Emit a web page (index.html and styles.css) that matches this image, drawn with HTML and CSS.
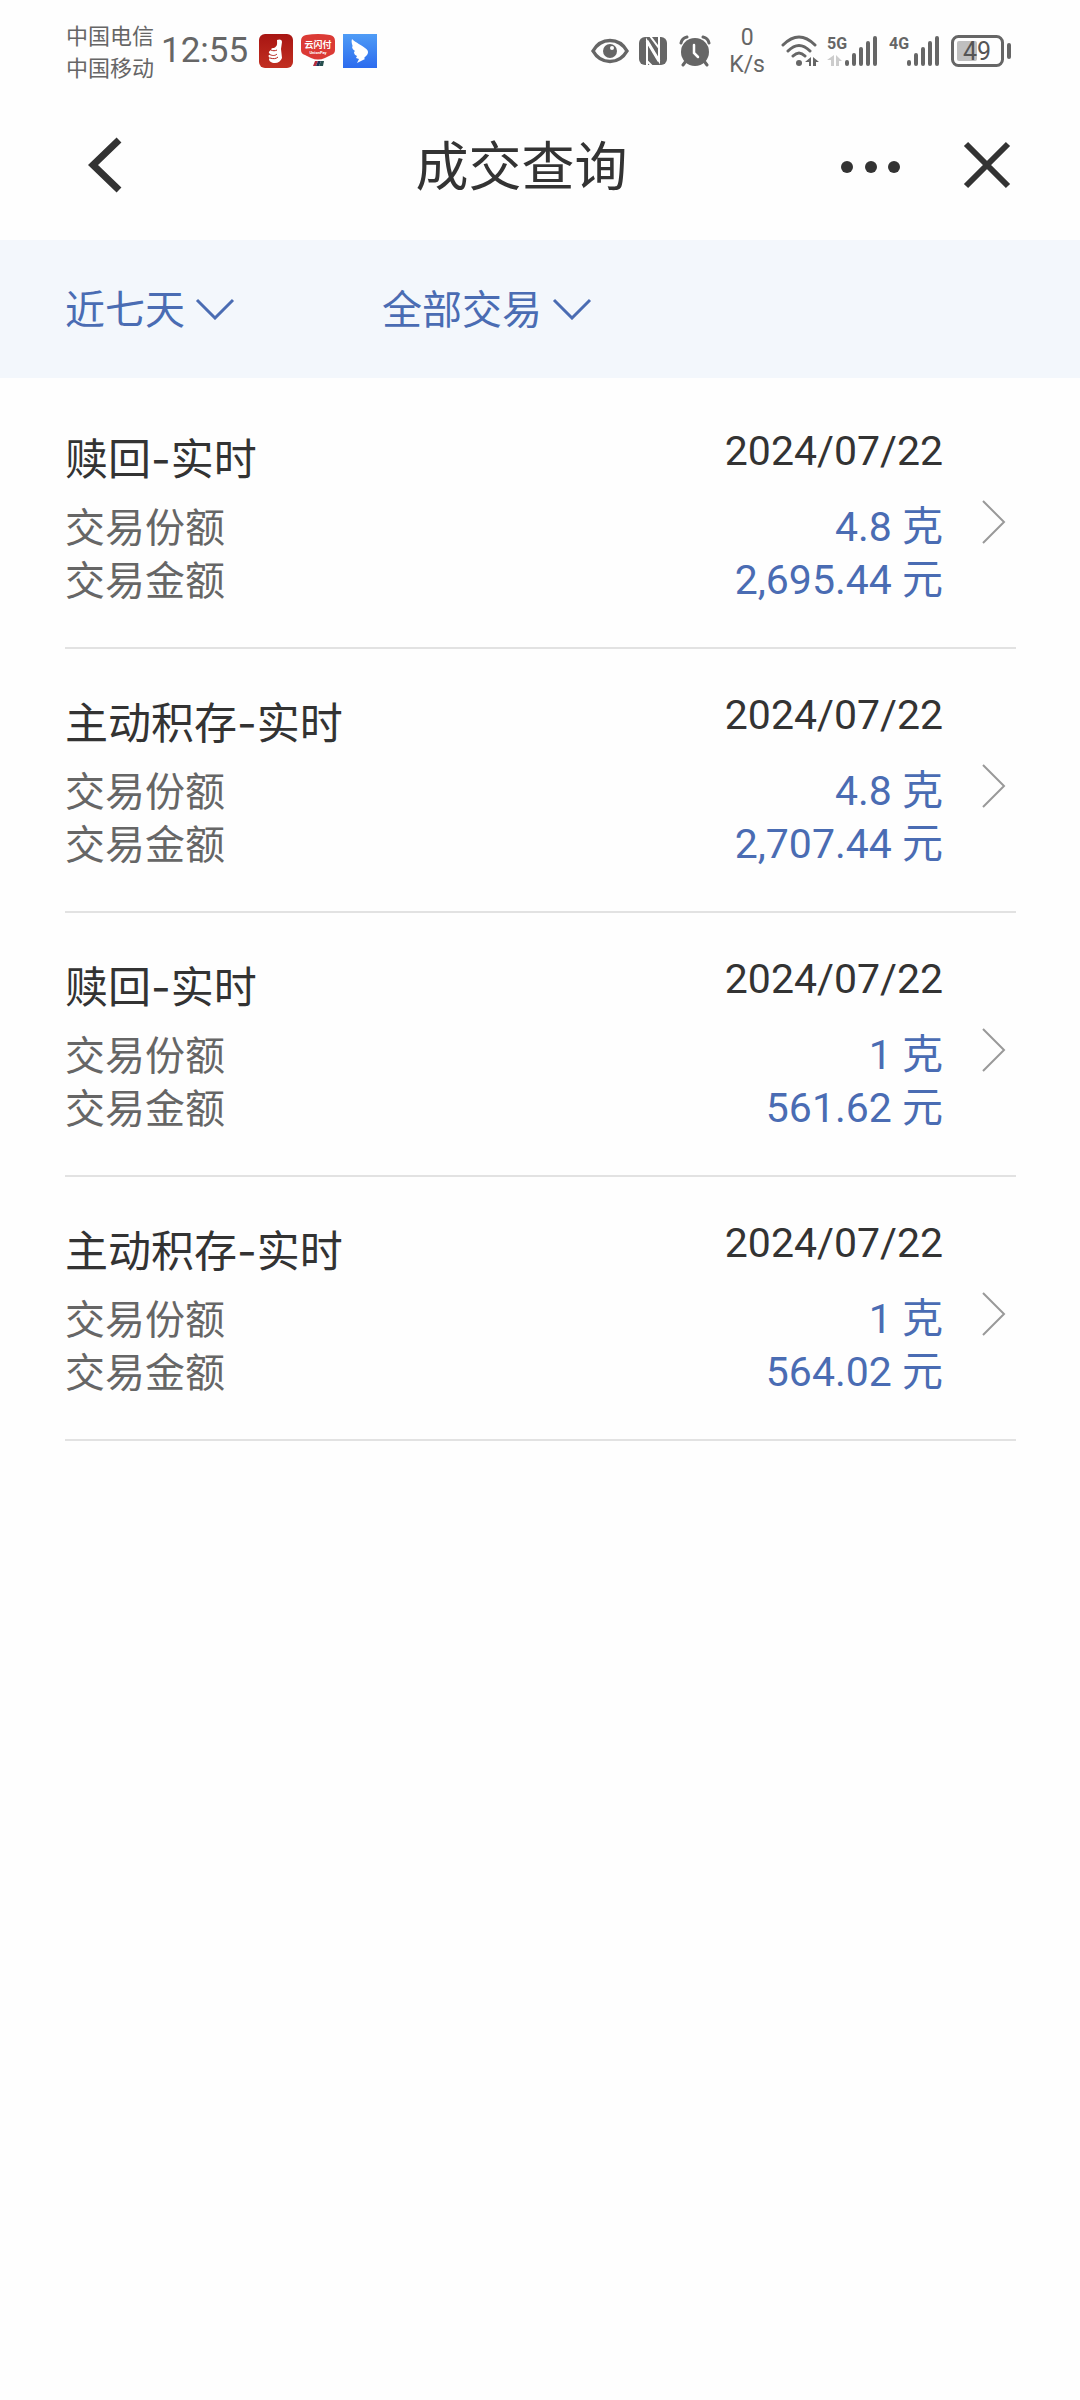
FILE: index.html
```html
<!DOCTYPE html>
<html lang="zh-CN">
<head>
<meta charset="utf-8">
<meta name="viewport" content="width=device-width, initial-scale=1">
<title>成交查询</title>
<link rel="stylesheet" href="styles.css">
</head>
<body>
<div class="status">
  <div class="carriers"><span>中国电信</span><span>中国移动</span></div>
  <time class="clock">12:55</time>
  <div class="apps">
    <svg width="34" height="34" viewBox="0 0 34 34" aria-hidden="true">
      <defs><linearGradient id="red" x1="0" y1="0" x2="0" y2="1"><stop offset="0" stop-color="#a81512"/><stop offset="1" stop-color="#c23022"/></linearGradient></defs>
      <rect width="34" height="34" rx="6" fill="url(#red)"/>
      <path d="M18 6c2-1 5-1 5 2l-1 7 1 9c-1 3-4 5-7 5-4 0-6-2-6-4l1-1c-2-1-2-3 0-4-2-1-1-3 1-4 0-2 2-2 3-2 4-2 3-5 3-8z" fill="#fff"/>
      <path d="M10 20c3 2 6 2 8 0M11 24c3 1 6 1 8-1M12 16c2 1 4 1 6 0" fill="none" stroke="#b3221b" stroke-width="1"/>
    </svg>
    <svg width="34" height="34" viewBox="0 0 34 34" aria-hidden="true">
      <path d="M5 1Q17-1 29 1q5 1 5 6v9q0 4-4 5l-6 3q-7 3-14 0l-6-3q-4-1-4-5V7Q0 2 5 1z" fill="#db3a35"/>
      <text class="pay-name" x="17" y="14" text-anchor="middle">云闪付</text>
      <text class="pay-sub" x="17" y="20" text-anchor="middle">UnionPay</text>
      <path d="M14 27h3l-2 5h-3z" fill="#b52d3d"/><path d="M17 27h3l-2 5h-3z" fill="#1f3056"/><path d="M20 27h3l-1 5h-4z" fill="#264f4e"/>
    </svg>
    <svg width="34" height="34" viewBox="0 0 34 34" aria-hidden="true">
      <defs><linearGradient id="sky" x1="0" y1="0" x2="0" y2="1"><stop offset="0" stop-color="#4f9cf6"/><stop offset="1" stop-color="#2c6bee"/></linearGradient></defs>
      <rect width="34" height="34" fill="url(#sky)"/>
      <path d="M9 5c4 4 10 6 13 9 3 2 4 4 2 7l-3 3 1 1-8 4 2-4-3-1 1-2c-2-1-3-2-3-4l1-1c-2-1-3-3-3-5l1 1c-1-3-2-5-1-8z" fill="#fff"/>
    </svg>
  </div>
  <div class="indicators">
    <svg class="eye" width="38" height="26" viewBox="0 0 38 26" fill="none" stroke="#666" aria-hidden="true">
      <path d="M2 13C10-1 28-1 36 13 28 27 10 27 2 13z" stroke-width="3.500"/><circle cx="19" cy="13" r="7" fill="#666" stroke="none"/><circle cx="21" cy="10" r="2" fill="#fff" stroke="none"/>
    </svg>
    <svg class="nfc" width="30" height="30" viewBox="0 0 30 30" aria-hidden="true">
      <rect x="1" y="1" width="28" height="28" rx="6" fill="#666"/>
      <path d="M9 30V5L21 25V10" fill="none" stroke="#fff" stroke-width="2"/>
      <path d="M9 5L21 25" fill="none" stroke="#fff" stroke-width="3"/>
      <path d="M12 0L21 12V0M9 18v7l5 5" fill="none" stroke="#fff" stroke-width="2"/>
    </svg>
    <svg class="alarm" width="32" height="32" viewBox="0 0 32 32" fill="none" stroke="#666" stroke-width="3" stroke-linecap="round" aria-hidden="true">
      <circle cx="16" cy="17" r="14" fill="#666" stroke="none"/>
      <path d="M2 8Q3 3 8 2M24 2Q29 3 30 8M7 26l-3 4M25 26l3 4"/><path d="M15 10v8l4 4" stroke="#fff" stroke-width="2.500"/>
    </svg>
    <div class="speed"><span>0</span><span>K/s</span></div>
    <svg class="wifi" width="38" height="32" viewBox="0 0 38 32" fill="none" stroke="#666" stroke-width="3" stroke-linecap="round" aria-hidden="true">
      <path d="M2 10Q18-6 34 10M7 16Q18 5 29 16M12 21Q18 15 24 21"/><circle cx="18" cy="28" r="3" fill="#666" stroke="none"/>
      <path d="M30 22v9h-2v-4h-4zM32 22l6 5h-3v4h-3z" fill="#666" stroke="none"/>
    </svg>
    <svg class="signal" width="52" height="32" viewBox="0 0 52 32" aria-hidden="true">
      <text class="net" x="0" y="14">5G</text>
      <path d="M7 20v11H4v-6H0zM9 20l6 6h-3v5H9z" fill="#ccc"/>
      <path d="M20 27v2M27 20v9M34 14v15M41 8v21M48 3v26" stroke="#666" stroke-width="4" stroke-linecap="round"/>
    </svg>
    <svg class="signal" width="52" height="32" viewBox="0 0 52 32" aria-hidden="true">
      <text class="net" x="0" y="14">4G</text>
      <path d="M20 27v2M27 20v9M34 14v15M41 8v21M48 3v26" stroke="#666" stroke-width="4" stroke-linecap="round"/>
    </svg>
    <svg class="battery" width="60" height="32" viewBox="0 0 60 32" aria-hidden="true">
      <rect x="6" y="6" width="20" height="20" rx="2" fill="#bfbfbf"/>
      <rect x="1.500" y="1.500" width="50" height="29" rx="6" fill="none" stroke="#666" stroke-width="3"/>
      <rect x="56" y="8" width="4" height="16" rx="2" fill="#666"/>
      <text class="level" x="26" y="25" text-anchor="middle">49</text>
    </svg>
  </div>
</div>

<header class="nav">
  <button class="icon-btn back" type="button" aria-label="返回">
    <svg width="34" height="56" viewBox="0 0 34 56"><path d="M31 3L5 28l26 25" fill="none" stroke="#333" stroke-width="7"/></svg>
  </button>
  <h1 class="title">成交查询</h1>
  <div class="actions">
    <button class="icon-btn more" type="button" aria-label="更多">
      <svg width="60" height="12" viewBox="0 0 60 12" fill="#333"><circle cx="6" cy="6" r="6"/><circle cx="30" cy="6" r="6"/><circle cx="53" cy="6" r="6"/></svg>
    </button>
    <button class="icon-btn" type="button" aria-label="关闭">
      <svg width="48" height="48" viewBox="0 0 48 48"><path d="M3 3l42 42M45 3L3 45" fill="none" stroke="#333" stroke-width="6"/></svg>
    </button>
  </div>
</header>

<form class="filters">
  <label class="filter">
    <select aria-label="时间范围"><option>近七天</option><option>近一月</option><option>近三月</option></select>
    <svg width="40" height="22" viewBox="0 0 40 22"><path d="M2 2l18 18L38 2" fill="none" stroke="#4a6cb3" stroke-width="3"/></svg>
  </label>
  <label class="filter">
    <select aria-label="交易类型"><option>全部交易</option><option>主动积存</option><option>赎回</option></select>
    <svg width="40" height="22" viewBox="0 0 40 22"><path d="M2 2l18 18L38 2" fill="none" stroke="#4a6cb3" stroke-width="3"/></svg>
  </label>
</form>

<main>
<ul class="records">
  <li><a class="record" href="#r1">
    <div class="names"><h2>赎回-实时</h2><span>交易份额</span><span>交易金额</span></div>
    <div class="values"><time>2024/07/22</time><span>4.8 克</span><span>2,695.44 元</span></div>
    <svg class="arrow" width="24" height="44" viewBox="0 0 24 44"><path d="M1 1l21 21L1 43" fill="none" stroke="#999" stroke-width="2"/></svg>
  </a></li>
  <li><a class="record" href="#r2">
    <div class="names"><h2>主动积存-实时</h2><span>交易份额</span><span>交易金额</span></div>
    <div class="values"><time>2024/07/22</time><span>4.8 克</span><span>2,707.44 元</span></div>
    <svg class="arrow" width="24" height="44" viewBox="0 0 24 44"><path d="M1 1l21 21L1 43" fill="none" stroke="#999" stroke-width="2"/></svg>
  </a></li>
  <li><a class="record" href="#r3">
    <div class="names"><h2>赎回-实时</h2><span>交易份额</span><span>交易金额</span></div>
    <div class="values"><time>2024/07/22</time><span>1 克</span><span>561.62 元</span></div>
    <svg class="arrow" width="24" height="44" viewBox="0 0 24 44"><path d="M1 1l21 21L1 43" fill="none" stroke="#999" stroke-width="2"/></svg>
  </a></li>
  <li><a class="record" href="#r4">
    <div class="names"><h2>主动积存-实时</h2><span>交易份额</span><span>交易金额</span></div>
    <div class="values"><time>2024/07/22</time><span>1 克</span><span>564.02 元</span></div>
    <svg class="arrow" width="24" height="44" viewBox="0 0 24 44"><path d="M1 1l21 21L1 43" fill="none" stroke="#999" stroke-width="2"/></svg>
  </a></li>
</ul>
</main>
</body>
</html>
```
FILE: styles.css
```css
* { box-sizing: border-box; }

body {
  margin: 0;
  background: #fefefe;
  color: #333;
  font-family: Roboto, "Noto Sans CJK SC", sans-serif;
}

svg { display: block; flex: none; }

/* Status bar */
.status {
  display: flex;
  align-items: center;
  height: 100px;
  padding: 2px 69px 0 66px;
  color: #666;
}
.carriers {
  display: flex;
  flex-direction: column;
  padding-top: 4px;
  font-size: 22px;
  line-height: 32px;
}
.clock { margin-left: 7px; font-size: 35px; line-height: 40px; }
.apps { display: flex; gap: 8px; margin-left: 11px; }
.pay-name { font-size: 9px; font-weight: 700; fill: #fff; }
.pay-sub { font-size: 4px; font-weight: 700; fill: #fff; }
.indicators {
  display: flex;
  align-items: center;
  margin-left: auto;
}
.nfc { margin-left: 9px; }
.alarm { margin-left: 11px; }
.speed {
  display: flex;
  flex-direction: column;
  align-items: center;
  margin-left: 18px;
  font-size: 23px;
  line-height: 27px;
}
.wifi { margin-left: 16px; }
.signal { margin-left: 8px; }
.signal + .signal { margin-left: 10px; }
.battery { margin-left: 10px; }
.net { font-size: 16px; font-weight: 700; fill: #666; }
.level { font-size: 25px; fill: #555; }

/* Title bar */
.nav {
  display: grid;
  grid-template-columns: 1fr auto 1fr;
  align-items: center;
  height: 140px;
  padding: 0 69px 10px 32px;
}
.icon-btn {
  display: grid;
  place-items: center;
  padding: 0;
  border: 0;
  background: none;
}
.back { justify-self: start; margin-left: 56px; }
.title {
  margin: 0;
  padding-top: 5px;
  font-size: 53px;
  font-weight: 400;
  line-height: 64px;
}
.actions {
  display: flex;
  align-items: center;
  justify-self: end;
  gap: 62px;
}
.more { padding-top: 4px; }

/* Filters */
.filters {
  display: flex;
  gap: 147px;
  height: 138px;
  padding: 0 65px;
  background: #f3f7fc;
}
.filter { display: flex; align-items: center; gap: 10px; }
.filter select {
  appearance: none;
  padding: 4px 0 0;
  border: 0;
  background: none;
  color: #4a6cb3;
  font: 40px/60px Roboto, "Noto Sans CJK SC", sans-serif;
}

/* Records */
.records {
  margin: 0;
  padding: 7px 64px 0 65px;
  list-style: none;
}
.record {
  display: flex;
  height: 264px;
  border-bottom: 2px solid #e2e2e2;
  color: inherit;
  text-decoration: none;
}
.names,
.values {
  display: flex;
  flex-direction: column;
  font-size: 40px;
  line-height: 53px;
}
.names { padding-top: 44px; color: #666; }
.names h2 {
  margin: 0 0 13px;
  color: #333;
  font: 400 43px/60px Inter, "Noto Sans CJK SC", sans-serif;
}
.values {
  margin-left: auto;
  padding-top: 36px;
  align-items: flex-end;
  color: #4a6cb3;
  font-size: 41px;
}
.values time { margin-bottom: 20px; color: #333; line-height: 60px; }
.arrow { margin: 115px 10px 0 39px; }
```
